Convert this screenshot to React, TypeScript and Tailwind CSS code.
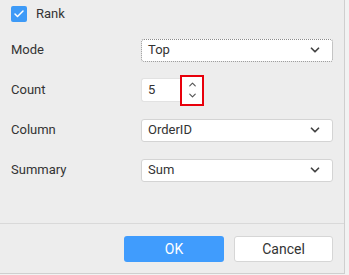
import { Check, ChevronDown, ChevronUp } from 'lucide-react';

function Select({ value, focused }: { value: string; focused?: boolean }) {
  return (
    <div
      className={
        'flex h-[23px] w-[192px] items-center justify-between rounded-[3px] bg-white pl-[6px] pr-[10px] ' +
        (focused ? 'border border-dotted border-[#8a8a8a]' : 'border border-[#d4d4d4]')
      }
    >
      <span>{value}</span>
      <ChevronDown className="size-[14px] text-[#444]" strokeWidth={3} />
    </div>
  );
}

export default function App() {
  const rows = [
    { label: 'Mode', control: <Select value="Top" focused /> },
    {
      label: 'Count',
      control: (
        <div className="flex items-center">
          <div className="flex h-[24px] w-[39px] items-center rounded-l-[3px] border border-r-0 border-[#e2e2e2] bg-white pl-[6px]">
            5
          </div>
          <div className="flex h-[31px] w-[24px] flex-col items-center justify-center border-2 border-[#e8000b] bg-white">
            <ChevronUp className="size-[11px] text-[#555]" strokeWidth={2.5} />
            <ChevronDown className="size-[11px] text-[#555]" strokeWidth={2.5} />
          </div>
        </div>
      ),
    },
    { label: 'Column', control: <Select value="OrderID" /> },
    { label: 'Summary', control: <Select value="Sum" /> },
  ];

  return (
    <div className="h-[275px] w-[349px] bg-[#f2f2f2] font-['Roboto',sans-serif] text-[13px] text-[#333]">
      <div className="flex h-[274px] w-[345px] flex-col border-b border-r border-[#cfcfcf] bg-[#ededed]">
        {/* Rank */}
        <div className="flex h-[26px] items-center gap-[9px] pl-[11px] pt-[1px]">
          <span className="flex size-[16px] items-center justify-center rounded-[2px] bg-[#3d9af7]">
            <Check className="size-[12px] text-white" strokeWidth={3} />
          </span>
          <span>Rank</span>
        </div>

        {/* Fields */}
        <div className="mt-[4px] flex flex-col pl-[11px]">
          {rows.map((r) => (
            <div key={r.label} className="grid h-[40px] grid-cols-[130px_1fr] items-center">
              <span>{r.label}</span>
              {r.control}
            </div>
          ))}
        </div>

        {/* Footer */}
        <div className="mt-auto border-t border-[#d9d9d9] pb-[11px] pt-[12px]">
          <div className="flex justify-end gap-[10px] pr-[11px]">
            <button className="h-[26px] w-[100px] rounded-[3px] bg-[#409cfd] text-[14px] text-white">OK</button>
            <button className="h-[26px] w-[99px] rounded-[3px] border border-[#d6d6d6] bg-white text-[14px] text-[#333]">
              Cancel
            </button>
          </div>
        </div>
      </div>
    </div>
  );
}
